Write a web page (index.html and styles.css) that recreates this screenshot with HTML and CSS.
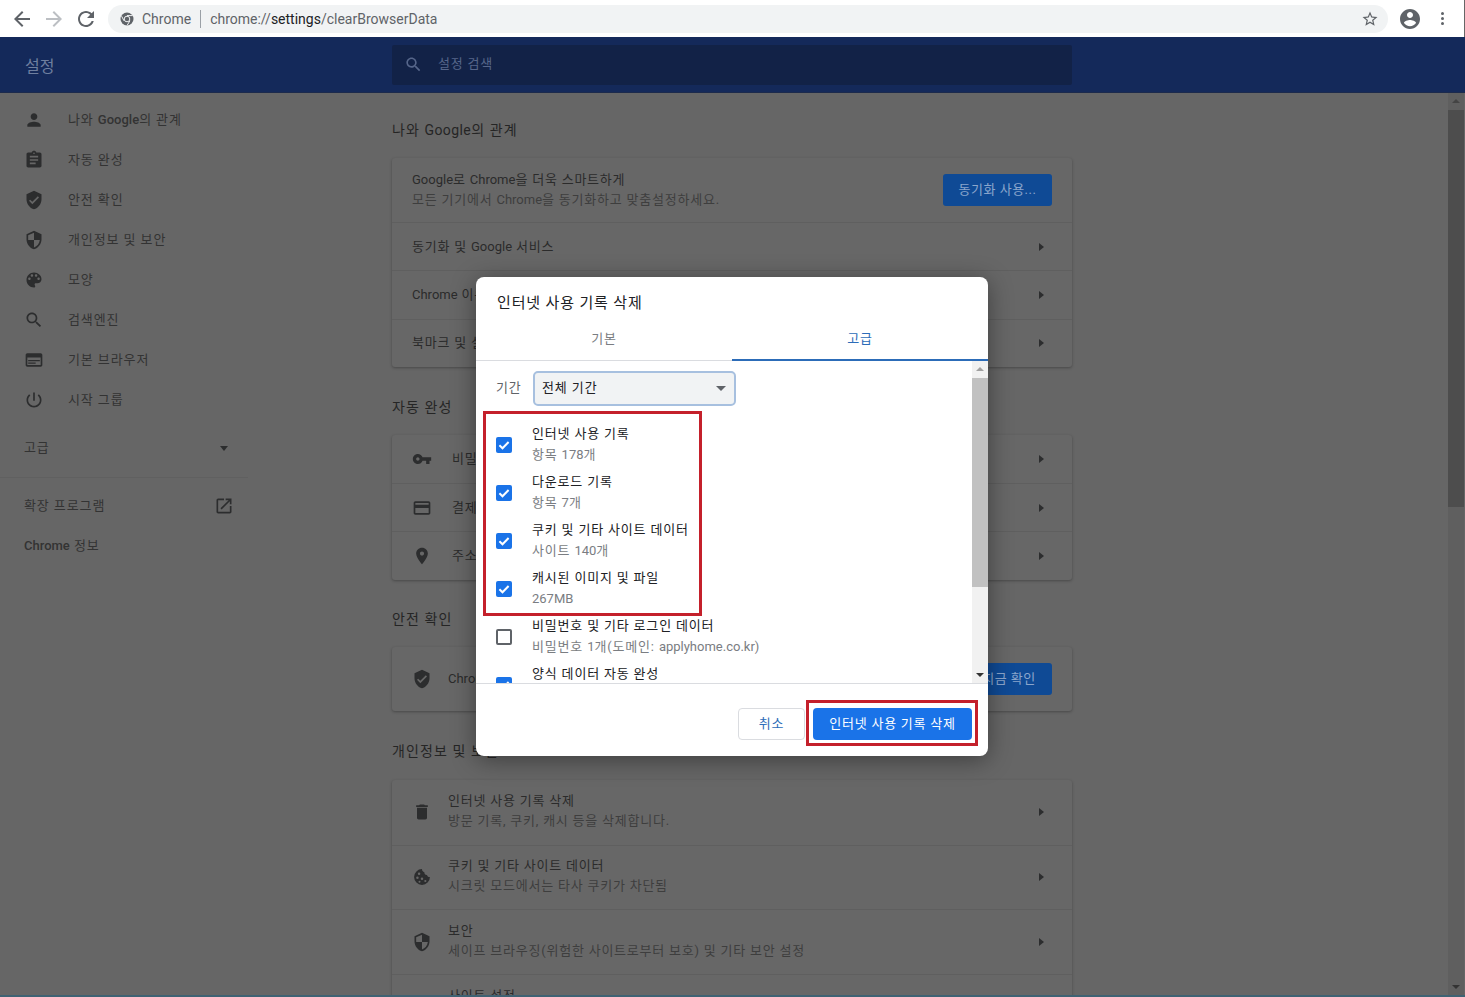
FILE: index.html
```html
<!DOCTYPE html>
<html lang="ko">
<head>
    <meta charset="UTF-8">
    <title>설정 - 인터넷 사용 기록 삭제</title>
    <link rel="stylesheet" href="styles.css">
</head>
<body>

    <svg class="icon-defs" xmlns="http://www.w3.org/2000/svg">
        <symbol id="i-person" viewBox="0 0 24 24"><path d="M12 12c2.21 0 4-1.79 4-4s-1.79-4-4-4-4 1.79-4 4 1.79 4 4 4zm0 2c-2.67 0-8 1.34-8 4v2h16v-2c0-2.66-5.33-4-8-4z"/></symbol>
        <symbol id="i-assignment" viewBox="0 0 24 24"><path d="M19 3h-4.18C14.4 1.84 13.3 1 12 1c-1.3 0-2.4.84-2.82 2H5c-1.1 0-2 .9-2 2v14c0 1.1.9 2 2 2h14c1.1 0 2-.9 2-2V5c0-1.1-.9-2-2-2zm-7 0c.55 0 1 .45 1 1s-.45 1-1 1-1-.45-1-1 .45-1 1-1zm2 14H7v-2h7v2zm3-4H7v-2h10v2zm0-4H7V7h10v2z"/></symbol>
        <symbol id="i-verified" viewBox="0 0 24 24"><path d="M12 1L3 5v6c0 5.55 3.84 10.74 9 12 5.16-1.26 9-6.45 9-12V5l-9-4zm-2 16l-4-4 1.41-1.41L10 14.17l6.59-6.59L18 9l-8 8z"/></symbol>
        <symbol id="i-security" viewBox="0 0 24 24"><path d="M12 1L3 5v6c0 5.55 3.84 10.74 9 12 5.16-1.26 9-6.45 9-12V5l-9-4zm0 10.99h7c-.53 4.12-3.28 7.79-7 8.94V12H5V6.3l7-3.11v8.8z"/></symbol>
        <symbol id="i-palette" viewBox="0 0 24 24"><path d="M12 3c-4.97 0-9 4.03-9 9s4.03 9 9 9c.83 0 1.5-.67 1.5-1.5 0-.39-.15-.74-.39-1.01-.23-.26-.38-.61-.38-.99 0-.83.67-1.5 1.5-1.5H16c2.76 0 5-2.24 5-5 0-4.42-4.03-8-9-8zm-5.5 9c-.83 0-1.5-.67-1.5-1.5S5.67 9 6.5 9 8 9.67 8 10.5 7.33 12 6.5 12zm3-4C8.67 8 8 7.33 8 6.5S8.67 5 9.5 5s1.5.67 1.5 1.5S10.33 8 9.5 8zm5 0c-.83 0-1.5-.67-1.5-1.5S13.67 5 14.5 5s1.5.67 1.5 1.5S15.33 8 14.5 8zm3 4c-.83 0-1.5-.67-1.5-1.5S16.67 9 17.5 9s1.5.67 1.5 1.5-.67 1.5-1.5 1.5z"/></symbol>
        <symbol id="i-search" viewBox="0 0 24 24"><path d="M15.5 14h-.79l-.28-.27C15.41 12.59 16 11.11 16 9.5 16 5.91 13.09 3 9.5 3S3 5.91 3 9.5 5.91 16 9.5 16c1.61 0 3.09-.59 4.23-1.57l.27.28v.79l5 4.99L20.49 19l-4.99-5zm-6 0C7.01 14 5 11.99 5 9.5S7.01 5 9.5 5 14 7.01 14 9.5 11.99 14 9.5 14z"/></symbol>
        <symbol id="i-browser" viewBox="0 0 24 24"><path d="M20 4H4c-1.1 0-2 .9-2 2v12c0 1.1.9 2 2 2h16c1.1 0 2-.9 2-2V6c0-1.1-.9-2-2-2zm0 14H4V9h16v9zM5 12h14v1.5H5zM5 15h9v1.5H5z"/></symbol>
        <symbol id="i-power" viewBox="0 0 24 24"><path d="M13 3h-2v10h2V3zm4.83 2.17l-1.42 1.42C17.99 7.86 19 9.81 19 12c0 3.87-3.13 7-7 7s-7-3.13-7-7c0-2.19 1.01-4.14 2.58-5.42L6.17 5.17C4.23 6.82 3 9.26 3 12c0 4.97 4.03 9 9 9s9-4.03 9-9c0-2.74-1.23-5.18-3.17-6.83z"/></symbol>
        <symbol id="i-open" viewBox="0 0 24 24"><path d="M19 19H5V5h7V3H5c-1.11 0-2 .9-2 2v14c0 1.1.89 2 2 2h14c1.1 0 2-.9 2-2v-7h-2v7zM14 3v2h3.59l-9.83 9.83 1.41 1.41L19 6.41V10h2V3h-7z"/></symbol>
        <symbol id="i-key" viewBox="0 0 24 24"><path d="M12.65 10C11.83 7.67 9.61 6 7 6c-3.31 0-6 2.69-6 6s2.69 6 6 6c2.61 0 4.83-1.67 5.65-4H17v4h4v-4h2v-4H12.65zM7 14c-1.1 0-2-.9-2-2s.9-2 2-2 2 .9 2 2-.9 2-2 2z"/></symbol>
        <symbol id="i-card" viewBox="0 0 24 24"><path d="M20 4H4c-1.11 0-1.99.89-1.99 2L2 18c0 1.11.89 2 2 2h16c1.11 0 2-.89 2-2V6c0-1.11-.89-2-2-2zm0 14H4v-6h16v6zm0-10H4V6h16v2z"/></symbol>
        <symbol id="i-place" viewBox="0 0 24 24"><path d="M12 2C8.13 2 5 5.13 5 9c0 5.25 7 13 7 13s7-7.75 7-13c0-3.87-3.13-7-7-7zm0 9.5c-1.38 0-2.5-1.12-2.5-2.5s1.12-2.5 2.5-2.5 2.5 1.12 2.5 2.5-1.12 2.5-2.5 2.5z"/></symbol>
        <symbol id="i-delete" viewBox="0 0 24 24"><path d="M6 19c0 1.1.9 2 2 2h8c1.1 0 2-.9 2-2V7H6v12zM19 4h-3.5l-1-1h-5l-1 1H5v2h14V4z"/></symbol>
        <symbol id="i-cookie" viewBox="0 0 24 24"><path fill-rule="evenodd" d="M12 2.5a9.5 9.5 0 1 0 9.5 9.5c-1.9.3-3.2-.8-3.5-2.5-1.9.2-3.3-1.2-3.2-3.2-1.7-.3-2.9-1.9-2.8-3.8zM8.5 6.5a1.5 1.5 0 1 1 0 3 1.5 1.5 0 0 1 0-3zm-2 5a1.5 1.5 0 1 1 0 3 1.5 1.5 0 0 1 0-3zm5.5 1a1.5 1.5 0 1 1 0 3 1.5 1.5 0 0 1 0-3zm-3 4a1.2 1.2 0 1 1 0 2.4 1.2 1.2 0 0 1 0-2.4zm7-1a1.3 1.3 0 1 1 0 2.6 1.3 1.3 0 0 1 0-2.6z"/></symbol>
    </svg>

    <div class="toolbar">
        <svg class="tool-icon" viewBox="0 0 24 24"><path d="M20 11H7.83l5.59-5.59L12 4l-8 8 8 8 1.41-1.41L7.83 13H20v-2z"/></svg>
        <svg class="tool-icon disabled" viewBox="0 0 24 24"><path d="M12 4l-1.41 1.41L16.17 11H4v2h12.17l-5.58 5.59L12 20l8-8z"/></svg>
        <svg class="tool-icon" viewBox="0 0 24 24"><path d="M17.65 6.35C16.2 4.9 14.21 4 12 4c-4.42 0-7.99 3.58-7.99 8s3.57 8 7.99 8c3.73 0 6.84-2.55 7.73-6h-2.08c-.82 2.33-3.04 4-5.65 4-3.31 0-6-2.69-6-6s2.69-6 6-6c1.66 0 3.14.69 4.22 1.78L13 11h7V4l-2.35 2.35z"/></svg>
        <div class="omnibox">
            <svg class="site-icon" viewBox="0 0 16 16">
                <circle cx="8" cy="8" r="6.5" fill="#5f6368"/>
                <path d="M8 4.6h5.4M5 9.8 2.6 5.2M10.9 9.8 8.1 14.4" stroke="#f1f3f4" stroke-width="1"/>
                <circle cx="8" cy="8" r="2.8" fill="#5f6368" stroke="#f1f3f4" stroke-width="1"/>
            </svg>
            <span class="site-name">Chrome</span>
            <span class="omni-sep"></span>
            <span class="url">chrome://<b>settings</b>/clearBrowserData</span>
            <svg class="star" viewBox="0 0 24 24"><path d="M22 9.24l-7.19-.62L12 2 9.19 8.63 2 9.24l5.46 4.73L5.82 21 12 17.27 18.18 21l-1.63-7.03L22 9.24zM12 15.4l-3.76 2.27 1-4.28-3.32-2.88 4.38-.38L12 6.1l1.71 4.04 4.38.38-3.32 2.88 1 4.28L12 15.4z"/></svg>
        </div>
        <svg class="avatar" viewBox="0 0 24 24"><path d="M12 2C6.48 2 2 6.48 2 12s4.48 10 10 10 10-4.48 10-10S17.52 2 12 2zm0 3c1.66 0 3 1.34 3 3s-1.34 3-3 3-3-1.34-3-3 1.34-3 3-3zm0 14.2c-2.5 0-4.71-1.28-6-3.22.03-1.99 4-3.08 6-3.08 1.99 0 5.97 1.09 6 3.08-1.29 1.94-3.5 3.22-6 3.22z"/></svg>
        <div class="menu-dots"><i></i><i></i><i></i></div>
    </div>

    <header class="settings-header">
        <h1>설정</h1>
        <div class="search-box">
            <svg class="search-icon"><use href="#i-search"/></svg>
            <span>설정 검색</span>
        </div>
    </header>

    <div class="layout">
        <nav class="sidebar">
            <a class="nav-item"><svg><use href="#i-person"/></svg><span>나와 <b>Google</b>의 관계</span></a>
            <a class="nav-item"><svg><use href="#i-assignment"/></svg><span>자동 완성</span></a>
            <a class="nav-item"><svg><use href="#i-verified"/></svg><span>안전 확인</span></a>
            <a class="nav-item"><svg><use href="#i-security"/></svg><span>개인정보 및 보안</span></a>
            <a class="nav-item"><svg><use href="#i-palette"/></svg><span>모양</span></a>
            <a class="nav-item"><svg><use href="#i-search"/></svg><span>검색엔진</span></a>
            <a class="nav-item"><svg><use href="#i-browser"/></svg><span>기본 브라우저</span></a>
            <a class="nav-item"><svg><use href="#i-power"/></svg><span>시작 그룹</span></a>
            <div class="nav-plain advanced"><span>고급</span><i class="caret"></i></div>
            <div class="nav-sep"></div>
            <div class="nav-plain"><span>확장 프로그램</span><svg class="ext-icon"><use href="#i-open"/></svg></div>
            <div class="nav-plain"><span><b>Chrome</b> 정보</span></div>
        </nav>

        <main class="main">
            <h2>나와 <span class="en">Google</span>의 관계</h2>
            <section class="card">
                <div class="row tall">
                    <div class="row-text">
                        <div><span class="en">Google</span>로 <span class="en">Chrome</span>을 더욱 스마트하게</div>
                        <div class="sub">모든 기기에서 <span class="en">Chrome</span>을 동기화하고 맞춤설정하세요.</div>
                    </div>
                    <button class="page-btn sync-btn">동기화 사용...</button>
                </div>
                <div class="row"><div class="row-text">동기화 및 <span class="en">Google</span> 서비스</div><i class="arrow"></i></div>
                <div class="row"><div class="row-text"><span class="en">Chrome</span> 이름 및 사진</div><i class="arrow"></i></div>
                <div class="row"><div class="row-text">북마크 및 설정 가져오기</div><i class="arrow"></i></div>
            </section>

            <h2>자동 완성</h2>
            <section class="card">
                <div class="row wide"><svg class="row-icon"><use href="#i-key"/></svg><div class="row-text">비밀번호</div><i class="arrow"></i></div>
                <div class="row wide"><svg class="row-icon"><use href="#i-card"/></svg><div class="row-text">결제 수단</div><i class="arrow"></i></div>
                <div class="row wide"><svg class="row-icon"><use href="#i-place"/></svg><div class="row-text">주소 및 기타</div><i class="arrow"></i></div>
            </section>

            <h2>안전 확인</h2>
            <section class="card">
                <div class="row tall">
                    <svg class="row-icon"><use href="#i-verified"/></svg>
                    <div class="row-text"><span class="en">Chrome</span>이 데이터 침해 등으로부터 보호합니다.</div>
                    <button class="page-btn check-btn">지금 확인</button>
                </div>
            </section>

            <h2>개인정보 및 보안</h2>
            <section class="card">
                <div class="row taller"><svg class="row-icon"><use href="#i-delete"/></svg><div class="row-text"><div>인터넷 사용 기록 삭제</div><div class="sub">방문 기록, 쿠키, 캐시 등을 삭제합니다.</div></div><i class="arrow"></i></div>
                <div class="row taller"><svg class="row-icon"><use href="#i-cookie"/></svg><div class="row-text"><div>쿠키 및 기타 사이트 데이터</div><div class="sub">시크릿 모드에서는 타사 쿠키가 차단됨</div></div><i class="arrow"></i></div>
                <div class="row taller"><svg class="row-icon"><use href="#i-security"/></svg><div class="row-text"><div>보안</div><div class="sub">세이프 브라우징(위험한 사이트로부터 보호) 및 기타 보안 설정</div></div><i class="arrow"></i></div>
                <div class="row taller"><svg class="row-icon"><use href="#i-person"/></svg><div class="row-text"><div>사이트 설정</div><div class="sub">사이트에서 사용할 수 있는 정보 제어</div></div><i class="arrow"></i></div>
            </section>
        </main>

        <div class="page-scrollbar">
            <i class="sb-up"></i>
            <div class="page-thumb"></div>
            <i class="sb-down"></i>
        </div>
    </div>

    <div class="dialog">
        <div class="dialog-title">인터넷 사용 기록 삭제</div>
        <div class="tabs">
            <div class="tab">기본</div>
            <div class="tab active">고급</div>
        </div>
        <div class="dialog-body">
            <div class="dialog-list">
                <div class="period">
                    <span class="period-label">기간</span>
                    <div class="period-select"><span>전체 기간</span><i class="caret"></i></div>
                </div>
                <div class="check-row"><i class="box checked"><svg viewBox="0 0 16 16"><path d="M3.4 8.3 6.5 11.3 12.6 5"/></svg></i><div class="check-text"><div>인터넷 사용 기록</div><div class="sub">항목 <span class="en">178</span>개</div></div></div>
                <div class="check-row"><i class="box checked"><svg viewBox="0 0 16 16"><path d="M3.4 8.3 6.5 11.3 12.6 5"/></svg></i><div class="check-text"><div>다운로드 기록</div><div class="sub">항목 <span class="en">7</span>개</div></div></div>
                <div class="check-row"><i class="box checked"><svg viewBox="0 0 16 16"><path d="M3.4 8.3 6.5 11.3 12.6 5"/></svg></i><div class="check-text"><div>쿠키 및 기타 사이트 데이터</div><div class="sub">사이트 <span class="en">140</span>개</div></div></div>
                <div class="check-row"><i class="box checked"><svg viewBox="0 0 16 16"><path d="M3.4 8.3 6.5 11.3 12.6 5"/></svg></i><div class="check-text"><div>캐시된 이미지 및 파일</div><div class="sub"><span class="en">267MB</span></div></div></div>
                <div class="check-row"><i class="box"></i><div class="check-text"><div>비밀번호 및 기타 로그인 데이터</div><div class="sub">비밀번호 <span class="en">1</span>개(도메인: <span class="en">applyhome.co.kr</span>)</div></div></div>
                <div class="check-row"><i class="box checked"><svg viewBox="0 0 16 16"><path d="M3.4 8.3 6.5 11.3 12.6 5"/></svg></i><div class="check-text"><div>양식 데이터 자동 완성</div></div></div>
            </div>
            <div class="dialog-scrollbar">
                <i class="sb-up"></i>
                <div class="dialog-thumb"></div>
                <i class="sb-down"></i>
            </div>
        </div>
        <div class="dialog-footer">
            <button class="btn-cancel">취소</button>
            <button class="btn-confirm">인터넷 사용 기록 삭제</button>
        </div>
        <div class="mark mark-list"></div>
        <div class="mark mark-btn"></div>
    </div>

</body>
</html>
```

FILE: styles.css
```css
* {
    box-sizing: border-box;
}

html, body {
    margin: 0;
    height: 100%;
}

body {
    position: relative;
    display: flex;
    flex-direction: column;
    overflow: hidden;
    font-family: Roboto, "Noto Sans CJK KR", sans-serif;
    font-size: 13px;
    color: #2b2b2b;
    background: #666;
    border-bottom: 2px solid #3f6273;
}

b {
    font-weight: 500;
    letter-spacing: 0;
}

.en {
    letter-spacing: 0;
}

.icon-defs {
    position: absolute;
    width: 0;
    height: 0;
}

/* browser toolbar */
.toolbar {
    flex: none;
    display: flex;
    align-items: center;
    height: 37px;
    padding: 0 0 0 10px;
    background: #fff;
    border-right: 1px solid #666;
}

.tool-icon {
    width: 24px;
    height: 24px;
    margin-right: 8px;
    fill: #5f6368;
}

.tool-icon.disabled {
    fill: #bcbfc3;
}

.omnibox {
    display: flex;
    align-items: center;
    width: 1280px;
    height: 28px;
    margin-left: 2px;
    padding: 0 8px 0 11px;
    background: #f1f3f4;
    border-radius: 14px;
    font-size: 14px;
    color: #5f6368;
}

.site-icon {
    width: 16px;
    height: 16px;
    margin-right: 7px;
}

.omni-sep {
    width: 1px;
    height: 18px;
    margin: 0 9px;
    background: #9aa0a6;
}

.url b {
    font-weight: 400;
    color: #202124;
}

.star {
    width: 18px;
    height: 18px;
    margin-left: auto;
    margin-right: 1px;
    fill: #5f6368;
}

.avatar {
    width: 24px;
    height: 24px;
    margin-left: 10px;
    fill: #5f6368;
}

.menu-dots {
    display: flex;
    flex-direction: column;
    gap: 2px;
    margin-left: 19px;
}

.menu-dots i {
    width: 3px;
    height: 3px;
    border-radius: 50%;
    background: #5f6368;
}

/* settings header */
.settings-header {
    flex: none;
    display: flex;
    align-items: center;
    height: 56px;
    background: #14295a;
    border-bottom: 1px solid #1c2a4c;
}

.settings-header h1 {
    width: 392px;
    margin: 0;
    padding-left: 25px;
    font-size: 16px;
    font-weight: 400;
    color: #6f7f9f;
}

.search-box {
    display: flex;
    align-items: center;
    width: 680px;
    height: 40px;
    padding-left: 12px;
    background: #122247;
    color: #56668a;
    border-radius: 2px;
    letter-spacing: 0.8px;
}

.search-box span {
    margin-top: -4px;
}

.search-icon {
    width: 19px;
    height: 19px;
    margin-right: 15px;
    fill: #56668a;
}

/* page body */
.layout {
    flex: 1;
    display: flex;
    min-height: 0;
    overflow: hidden;
}

.sidebar {
    flex: none;
    width: 248px;
    padding-top: 7px;
    color: #333;
    letter-spacing: 0.9px;
}

.sidebar span {
    margin-top: -3px;
}

.nav-item {
    display: flex;
    align-items: center;
    height: 40px;
    padding-left: 24px;
}

.nav-item svg {
    width: 20px;
    height: 20px;
    margin-right: 24px;
    fill: #2c2d2e;
}

.nav-plain {
    display: flex;
    align-items: center;
    justify-content: space-between;
    height: 40px;
    padding: 0 14px 0 24px;
}

.advanced {
    margin-top: 8px;
}

.nav-sep {
    height: 1px;
    margin: 9px 0 8px;
    background: #606060;
}

.caret {
    width: 0;
    height: 0;
    margin-right: 6px;
    border: 4px solid transparent;
    border-top: 5px solid #2c2d2e;
    border-bottom: 0;
}

.ext-icon {
    width: 20px;
    height: 20px;
    fill: #2c2d2e;
}

.main {
    flex: none;
    width: 680px;
    margin-left: 144px;
    letter-spacing: 0.78px;
}

.main h2 {
    height: 20px;
    margin: 29.6px 0 18px;
    font-size: 14px;
    font-weight: 400;
    line-height: 20px;
    letter-spacing: 1.1px;
    color: #252525;
}

.main h2 .en {
    letter-spacing: 0.4px;
}

.main h2:first-child {
    margin-top: 27px;
}

.card {
    background: #676767;
    border-radius: 3px;
    box-shadow: 0 1px 3px rgba(0, 0, 0, 0.3);
}

.card:last-child {
    margin-top: 19px;
}

.row {
    display: flex;
    align-items: center;
    height: 48.33px;
    padding: 0 28px 0 20px;
    border-top: 1px solid #5f5f5f;
}

.row:first-child {
    border-top: 0;
}

.row.tall {
    height: 64px;
    padding-right: 20px;
}

.row.taller {
    height: 64.8px;
}

.row.taller .row-text {
    margin-top: -3px;
}

.row-icon {
    flex: none;
    width: 20px;
    height: 20px;
    margin-right: 16px;
    fill: #2c2d2e;
}

.row.wide .row-icon {
    margin-right: 20px;
}

.row-text {
    flex: 1;
    line-height: 20px;
}

.sub {
    color: #3e3e3e;
}

.arrow {
    flex: none;
    width: 0;
    height: 0;
    border: 4px solid transparent;
    border-left: 5px solid #2c2d2e;
    border-right: 0;
}

.page-btn {
    flex: none;
    height: 32px;
    padding: 0 0 4px;
    border: 0;
    border-radius: 3px;
    background: #0f4a95;
    color: #8ba6cc;
    font: inherit;
    letter-spacing: 0.5px;
}

.sync-btn {
    width: 109px;
}

.check-btn {
    width: 86px;
}

/* scrollbars */
.page-scrollbar {
    position: relative;
    flex: none;
    width: 17px;
    margin-left: auto;
    background: #5f5f5f;
    border-right: 1px solid #666;
}

.page-thumb {
    position: absolute;
    top: 17px;
    left: 0;
    right: 0;
    height: 397px;
    background: #4d4d4d;
}

.sb-up, .sb-down {
    position: absolute;
    left: 4px;
    width: 0;
    height: 0;
    border: 4px solid transparent;
    border-top: 0;
    border-bottom: 4px solid #444;
}

.sb-up {
    top: 6px;
}

.sb-down {
    bottom: 6px;
    border-top: 4px solid #333;
    border-bottom: 0;
}

.dialog-scrollbar .sb-up {
    border-bottom-color: #a0a0a0;
}

/* dialog */
.dialog {
    position: absolute;
    top: 277px;
    left: 476px;
    display: flex;
    flex-direction: column;
    width: 512px;
    height: 479px;
    background: #fff;
    border-radius: 8px;
    box-shadow: 0 4px 24px rgba(0, 0, 0, 0.4);
    color: #202124;
    letter-spacing: 0.9px;
}

.dialog-title {
    flex: none;
    height: 46px;
    padding: 16px 21px 0;
    font-size: 15px;
    line-height: 20px;
    letter-spacing: 0.85px;
}

.tabs {
    flex: none;
    display: flex;
    height: 38px;
    border-bottom: 1px solid #dadce0;
}

.tab {
    flex: 1;
    height: 38px;
    padding-top: 6px;
    line-height: 20px;
    text-align: center;
    color: #7a7d82;
}

.tab.active {
    flex: none;
    width: 256px;
    color: #2c6cb8;
    border-bottom: 2px solid #2c6cb8;
}

.dialog-body {
    flex: 1;
    display: flex;
    min-height: 0;
}

.dialog-list {
    flex: 1;
    padding-left: 20px;
    overflow: hidden;
}

.period {
    display: flex;
    align-items: center;
    height: 60px;
    padding-bottom: 6px;
    color: #5f6368;
}

.period-label {
    width: 37px;
    margin-top: -4px;
}

.period-select {
    display: flex;
    align-items: center;
    justify-content: space-between;
    width: 203px;
    height: 35px;
    padding: 0 2px 0 7px;
    background: #f1f3f4;
    border: 2px solid #a7c0df;
    border-radius: 5px;
    color: #202124;
}

.period-select span {
    margin-top: -4px;
}

.period-select .caret {
    border-top-color: #5f6368;
    border-left-width: 5px;
    border-right-width: 5px;
}

.check-row {
    display: flex;
    align-items: center;
    height: 48px;
    line-height: 21px;
    letter-spacing: 0.82px;
}

.check-text {
    margin-top: -2px;
}

.box {
    flex: none;
    width: 16px;
    height: 16px;
    margin-right: 20px;
    border: 2px solid #5f6368;
    border-radius: 2px;
}

.box.checked {
    background: #1a73e8;
    border: 0;
}

.box svg {
    display: block;
    fill: none;
    stroke: #fff;
    stroke-width: 2;
}

.check-row:last-child {
    align-items: flex-start;
}

.check-row:last-child .box {
    margin-top: 16px;
}

.check-row:last-child .check-text {
    margin-top: 2px;
}

.check-row .sub {
    color: #7a7d82;
}

.dialog-scrollbar {
    position: relative;
    flex: none;
    width: 16px;
    background: #f1f1f1;
}

.dialog-thumb {
    position: absolute;
    top: 17px;
    left: 0;
    right: 0;
    height: 209px;
    background: #c1c1c1;
}

.dialog-footer {
    flex: none;
    display: flex;
    justify-content: flex-end;
    align-items: center;
    gap: 8px;
    height: 73px;
    padding: 7px 16px 0 0;
    border-top: 1px solid #dadce0;
}

.btn-cancel, .btn-confirm {
    height: 32px;
    padding: 0 0 3px;
    border-radius: 4px;
    font: inherit;
    letter-spacing: 0.75px;
}

.btn-cancel {
    width: 67px;
    background: #fff;
    border: 1px solid #dadce0;
    color: #2c6cb8;
}

.btn-confirm {
    width: 159px;
    background: #1a73e8;
    border: 0;
    color: #fff;
}

/* red highlight boxes drawn over the dialog */
.mark {
    position: absolute;
    border: 3px solid #c4202b;
}

.mark-list {
    top: 134px;
    left: 7px;
    width: 219px;
    height: 205px;
}

.mark-btn {
    top: 423px;
    left: 330px;
    width: 172px;
    height: 46px;
}
```
